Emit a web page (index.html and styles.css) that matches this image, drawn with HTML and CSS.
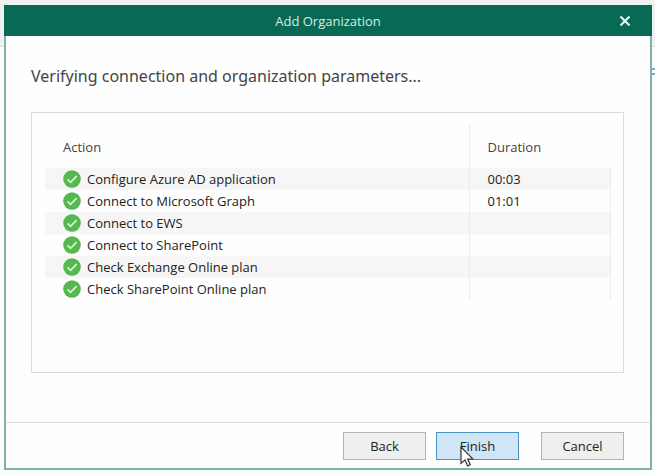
FILE: index.html
```html
<!DOCTYPE html>
<html lang="en">
<head>
<meta charset="utf-8">
<title>Add Organization</title>
<link rel="stylesheet" href="styles.css">
</head>
<body>
<svg class="defs" aria-hidden="true">
  <symbol id="ok" viewBox="0 0 18 18">
    <circle cx="9" cy="9" r="8.8" fill="#55b950"/>
    <path d="M4.500 9.400l3.100 2.900 6-6.100" fill="none" stroke="#d9f2d3" stroke-width="1.8"/>
  </symbol>
</svg>
<section class="dialog" role="dialog" aria-labelledby="title">
  <header class="titlebar">
    <h1 id="title">Add Organization</h1>
    <button class="close" type="button" aria-label="Close">
      <svg viewBox="0 0 12 12"><path d="M1.500 1.500l9 9M10.500 1.500l-9 9" fill="none" stroke="#e6f5ee" stroke-width="2.200"/></svg>
    </button>
  </header>
  <main class="content">
    <h2>Verifying connection and organization parameters...</h2>
    <div class="panel">
      <table>
        <thead>
          <tr><th class="action" scope="col">Action</th><th scope="col">Duration</th></tr>
        </thead>
        <tbody>
          <tr><td><div class="step"><svg><use href="#ok"/></svg>Configure Azure AD application</div></td><td>00:03</td></tr>
          <tr><td><div class="step"><svg><use href="#ok"/></svg>Connect to Microsoft Graph</div></td><td>01:01</td></tr>
          <tr><td><div class="step"><svg><use href="#ok"/></svg>Connect to EWS</div></td><td></td></tr>
          <tr><td><div class="step"><svg><use href="#ok"/></svg>Connect to SharePoint</div></td><td></td></tr>
          <tr><td><div class="step"><svg><use href="#ok"/></svg>Check Exchange Online plan</div></td><td></td></tr>
          <tr><td><div class="step"><svg><use href="#ok"/></svg>Check SharePoint Online plan</div></td><td></td></tr>
        </tbody>
      </table>
    </div>
  </main>
  <footer class="actions">
    <button class="btn" type="button">Back</button>
    <button class="btn primary" type="button">Finish
      <svg class="cursor" viewBox="0 0 14 21" aria-hidden="true"><path d="M1 1v16.500l4-3.600 2.700 6 2.600-1.200-2.600-5.700h5.300z" fill="#fff" stroke="#333" stroke-width="1.200"/></svg>
    </button>
    <button class="btn cancel" type="button">Cancel</button>
  </footer>
</section>
</body>
</html>
```

FILE: styles.css
```css
* { box-sizing: border-box; }

body {
  margin: 0;
  min-height: 100vh;
  padding: 5px 3px 5px 4px;
  display: flex;
  background:
    linear-gradient(#6fb0c0, #6fb0c0) right 68px / 3px 2px no-repeat,
    linear-gradient(#6fb0c0, #6fb0c0) right 73px / 3px 2px no-repeat,
    linear-gradient(#f0f1f0 46px, #d9dddb 46px, #d9dddb 47px, #fafffd 47px);
  font-family: "Open Sans", "Noto Sans", sans-serif;
  font-size: 13px;
  line-height: 18px;
  color: #222;
}

.defs { position: absolute; width: 0; height: 0; }

.dialog {
  flex: 1;
  display: flex;
  flex-direction: column;
  background: #fefefe;
  border: 2px solid #85b1a4;
  border-top: 0;
}

.titlebar {
  display: grid;
  grid-template-columns: 1fr auto 1fr;
  align-items: center;
  height: 31px;
  margin: 0 -2px;
  padding: 0 21px;
  background: #086a54;
  color: #d5eee4;
}

.titlebar h1 {
  grid-column: 2;
  margin: 0;
  font-size: 13px;
  font-weight: 400;
}

.close {
  justify-self: end;
  display: flex;
  padding: 0;
  border: 0;
  background: none;
}

.close svg { width: 12px; height: 12px; }

.content {
  flex: 1;
  display: flex;
  flex-direction: column;
  padding: 28px 26px 49px 25px;
}

h2 {
  margin: 0 0 24px;
  font-family: "Noto Sans", "Open Sans", sans-serif;
  font-size: 16px;
  line-height: 24px;
  font-weight: 400;
  color: #444;
}

.panel {
  flex: 1;
  padding: 11px 12px 0 13px;
  border: 1px solid #dcdcdc;
}

table {
  width: 100%;
  table-layout: fixed;
  border-collapse: separate;
  border-spacing: 0;
}

th, td { text-align: left; font-weight: 400; }

th {
  height: 44px;
  padding: 2px 18px 0;
  color: #444;
}

.action { width: 75%; }

td { height: 22px; padding: 0 18px; }

th:first-child, td { border-right: 1px solid #ececec; }

tbody tr:nth-child(odd) { background: #f6f6f6; }

.step { display: flex; align-items: center; gap: 6px; }

.step svg { width: 18px; height: 18px; }

.actions {
  display: flex;
  justify-content: flex-end;
  gap: 10px;
  padding: 9px 26px 8px;
  border-top: 1px solid #dcdcdc;
}

.btn {
  width: 83px;
  height: 28px;
  padding: 0;
  border: 1px solid #b4b4b4;
  background: #efefef;
  color: #222;
  font: inherit;
}

.primary {
  position: relative;
  border-color: #4a93c0;
  background: #d0e5f8;
}

.cancel { margin-left: 12px; }

.cursor {
  position: absolute;
  left: 23px;
  top: 13px;
  width: 14px;
  height: 21px;
}
```
